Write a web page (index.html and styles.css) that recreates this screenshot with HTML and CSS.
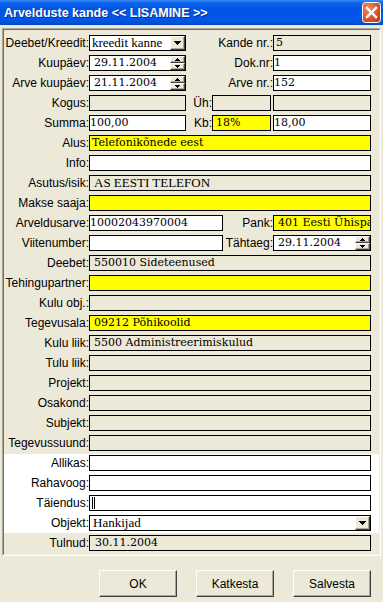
FILE: index.html
```html
<!DOCTYPE html>
<html lang="et">
    <head>
        <meta charset="utf-8">
        <title>Arvelduste kande</title>
        <link rel="stylesheet" href="styles.css">
    </head>
    <body>
        <div class="titlebar">
            <span class="title">Arvelduste kande &lt;&lt; LISAMINE &gt;&gt;</span>
            <span class="close-btn">
                <svg width="19" height="21" viewBox="0 0 19 21">
                    <defs>
                        <radialGradient id="cg" cx="0.35" cy="0.3" r="0.9">
                            <stop offset="0" stop-color="#F08A64"/>
                            <stop offset="0.6" stop-color="#D9512B"/>
                            <stop offset="1" stop-color="#B8391A"/>
                        </radialGradient>
                    </defs>
                    <rect x="0.5" y="0.5" width="18" height="20" rx="3" fill="url(#cg)" stroke="#fff"/>
                    <path d="M5 6 L14 15 M14 6 L5 15" stroke="#fff" stroke-width="2.4" stroke-linecap="square"/>
                </svg>
            </span>
        </div>

        <div class="panel">
            <div class="panel-inner">
                <div class="row">
                    <span class="lbl">Deebet/Kreedit:</span>
                    <div class="field combo w97 tms p2">
                        <span class="val">kreedit kanne</span>
                        <span class="drop"><svg width="7" height="4"><path d="M0 0H7V1H6V2H5V3H4V4H3V3H2V2H1V1H0Z"/></svg></span>
                    </div>
                    <span class="lbl2">Kande nr.:</span>
                    <div class="field ro w98 p2">5</div>
                </div>
                <div class="row">
                    <span class="lbl">Kuupäev:</span>
                    <div class="field combo w97">
                        <span class="val">29.11.2004</span>
                        <span class="spin">
                            <span class="spin-btn"><svg width="5" height="3"><path d="M2 0H3V1H4V2H5V3H0V2H1V1H2Z"/></svg></span>
                            <span class="spin-btn"><svg width="5" height="3"><path d="M0 0H5V1H4V2H3V3H2V2H1V1H0Z"/></svg></span>
                        </span>
                    </div>
                    <span class="lbl2">Dok.nr:</span>
                    <div class="field w98 p0">1</div>
                </div>
                <div class="row">
                    <span class="lbl">Arve kuupäev:</span>
                    <div class="field combo w97">
                        <span class="val">21.11.2004</span>
                        <span class="spin">
                            <span class="spin-btn"><svg width="5" height="3"><path d="M2 0H3V1H4V2H5V3H0V2H1V1H2Z"/></svg></span>
                            <span class="spin-btn"><svg width="5" height="3"><path d="M0 0H5V1H4V2H3V3H2V2H1V1H0Z"/></svg></span>
                        </span>
                    </div>
                    <span class="lbl2">Arve nr.:</span>
                    <div class="field w98 p0">152</div>
                </div>
                <div class="row">
                    <span class="lbl">Kogus:</span>
                    <div class="field ro w97"></div>
                    <span class="lbl-s">Üh:</span>
                    <div class="field ro w59"></div>
                    <div class="field ro w98 gap2"></div>
                </div>
                <div class="row">
                    <span class="lbl">Summa:</span>
                    <div class="field w97 p0">100,00</div>
                    <span class="lbl-s">Kb:</span>
                    <div class="field req w59 p3">18%</div>
                    <div class="field w98 gap2 p0">18,00</div>
                </div>
                <div class="row">
                    <span class="lbl">Alus:</span>
                    <div class="field req full p2">Telefonikõnede eest</div>
                </div>
                <div class="row">
                    <span class="lbl">Info:</span>
                    <div class="field full"></div>
                </div>
                <div class="row">
                    <span class="lbl">Asutus/isik:</span>
                    <div class="field ro full tms">AS EESTI TELEFON</div>
                </div>
                <div class="row">
                    <span class="lbl">Makse saaja:</span>
                    <div class="field req full"></div>
                </div>
                <div class="row">
                    <span class="lbl">Arveldusarve:</span>
                    <div class="field w134 p0">10002043970004</div>
                    <span class="lbl-m">Pank:</span>
                    <div class="field req w98">401 Eesti Ühispank</div>
                </div>
                <div class="row">
                    <span class="lbl">Viitenumber:</span>
                    <div class="field w134"></div>
                    <span class="lbl-m">Tähtaeg:</span>
                    <div class="field combo w98">
                        <span class="val">29.11.2004</span>
                        <span class="spin">
                            <span class="spin-btn"><svg width="5" height="3"><path d="M2 0H3V1H4V2H5V3H0V2H1V1H2Z"/></svg></span>
                            <span class="spin-btn"><svg width="5" height="3"><path d="M0 0H5V1H4V2H3V3H2V2H1V1H0Z"/></svg></span>
                        </span>
                    </div>
                </div>
                <div class="row">
                    <span class="lbl">Deebet:</span>
                    <div class="field ro full">550010 Sideteenused</div>
                </div>
                <div class="row">
                    <span class="lbl">Tehingupartner:</span>
                    <div class="field req full"></div>
                </div>
                <div class="row">
                    <span class="lbl">Kulu obj.:</span>
                    <div class="field ro full"></div>
                </div>
                <div class="row">
                    <span class="lbl">Tegevusala:</span>
                    <div class="field req full">09212 Põhikoolid</div>
                </div>
                <div class="row">
                    <span class="lbl">Kulu liik:</span>
                    <div class="field ro full">5500 Administreerimiskulud</div>
                </div>
                <div class="row">
                    <span class="lbl">Tulu liik:</span>
                    <div class="field ro full"></div>
                </div>
                <div class="row">
                    <span class="lbl">Projekt:</span>
                    <div class="field ro full"></div>
                </div>
                <div class="row">
                    <span class="lbl">Osakond:</span>
                    <div class="field ro full"></div>
                </div>
                <div class="row">
                    <span class="lbl">Subjekt:</span>
                    <div class="field ro full"></div>
                </div>
                <div class="row">
                    <span class="lbl">Tegevussuund:</span>
                    <div class="field ro full"></div>
                </div>

                <div class="band">
                    <div class="row">
                        <span class="lbl">Allikas:</span>
                        <div class="field full"></div>
                    </div>
                    <div class="row">
                        <span class="lbl">Rahavoog:</span>
                        <div class="field full"></div>
                    </div>
                    <div class="row">
                        <span class="lbl">Täiendus:</span>
                        <div class="field full p2"><span class="caret"></span></div>
                    </div>
                    <div class="row">
                        <span class="lbl">Objekt:</span>
                        <div class="field combo full tms p3">
                            <span class="val">Hankijad</span>
                            <span class="drop"><svg width="7" height="4"><path d="M0 0H7V1H6V2H5V3H4V4H3V3H2V2H1V1H0Z"/></svg></span>
                        </div>
                    </div>
                </div>

                <div class="row">
                    <span class="lbl">Tulnud:</span>
                    <div class="field ro full p5">30.11.2004</div>
                </div>
            </div>
        </div>

        <div class="buttons">
            <button class="btn">OK</button>
            <button class="btn">Katkesta</button>
            <button class="btn">Salvesta</button>
        </div>
    </body>
</html>
```

FILE: styles.css
```css
* {
    box-sizing: border-box;
}

body {
    margin: 0;
    width: 383px;
    height: 602px;
    overflow: hidden;
    background-color: #ECE9D8;
    font-family: "Liberation Sans", Arial, sans-serif;
    font-size: 12px;
    color: #000;
}

/* Window title */
.titlebar {
    height: 25px;
    display: flex;
    align-items: center;
    justify-content: space-between;
    padding: 0 2px 0 4px;
    background: linear-gradient(#3D8BF7 0, #0A62EC 3px, #0054E3 10px, #0058EA 19px, #0049CC 25px);
}

.title {
    color: white;
    font-weight: bold;
    font-size: 12.5px;
    text-shadow: 1px 1px 0 #0A2E8C;
}

.close-btn {
    display: flex;
    width: 19px;
    height: 21px;
}

/* Sunken form panel */
.panel {
    margin: 3px 2px 0;
    border: 1px solid;
    border-color: #ACA899 #fff #fff #ACA899;
}

.panel-inner {
    display: flex;
    flex-direction: column;
    gap: 4px;
    padding: 5px 0 3px;
    border: 1px solid;
    border-color: #716F64 #F1EFE2 #F1EFE2 #716F64;
}

.row {
    display: flex;
    height: 16px;
}

.band {
    display: flex;
    flex-direction: column;
    gap: 4px;
    margin: -1px 0 -2px;
    padding: 1px 0 2px;
    background-color: white;
}

.lbl,
.lbl2,
.lbl-s,
.lbl-m {
    flex: none;
    text-align: right;
    line-height: 16px;
    white-space: nowrap;
}

.lbl {
    width: 85px;
}

.lbl2 {
    width: 87px;
}

.lbl-s {
    width: 26px;
}

.lbl-m {
    width: 50px;
}

/* Inputs */
.field {
    flex: none;
    height: 16px;
    border: 1px solid #000;
    background-color: white;
    padding-left: 4px;
    font-family: "DejaVu Serif", "Liberation Serif", serif;
    font-size: 11px;
    line-height: 14px;
    white-space: nowrap;
    overflow: hidden;
}

.ro {
    background-color: #ECE9D8;
}

.req {
    background-color: #FFFF00;
}

.tms {
    font-family: "Liberation Serif", "Times New Roman", serif;
    font-size: 13px;
}

.p0 { padding-left: 0; }
.p2 { padding-left: 2px; }
.p3 { padding-left: 3px; }
.p5 { padding-left: 5px; }

.w97 { width: 97px; }
.w98 { width: 98px; }
.w59 { width: 59px; }
.w134 { width: 134px; }
.full { width: 282px; }

.gap2 {
    margin-left: 2px;
}

.combo {
    display: flex;
}

.val {
    flex: 1;
    overflow: hidden;
}

.drop,
.spin-btn {
    display: flex;
    align-items: center;
    justify-content: center;
    background-color: #ECE9D8;
    border: 1px solid;
    border-color: #fff #404040 #404040 #fff;
    box-shadow: inset -1px -1px 0 #ACA899;
}

.drop {
    flex: none;
    width: 15px;
    height: 14px;
}

.spin {
    flex: none;
    display: flex;
    flex-direction: column;
    width: 15px;
}

.spin-btn {
    height: 7px;
}

.caret {
    display: inline-block;
    width: 1px;
    height: 12px;
    margin-top: 1px;
    vertical-align: top;
    background-color: #000;
    box-shadow: 2px 0 0 #000;
}

/* Dialog buttons */
.buttons {
    display: flex;
    justify-content: flex-end;
    gap: 19px;
    margin-top: 14px;
    padding-right: 12px;
}

.btn {
    width: 78px;
    height: 27px;
    padding: 0;
    background-color: #ECE9D8;
    border: 1px solid;
    border-color: #fff #404040 #404040 #fff;
    box-shadow: inset -1px -1px 0 #ACA899;
    font-family: "Liberation Sans", Arial, sans-serif;
    font-size: 12px;
    color: #000;
}
```
